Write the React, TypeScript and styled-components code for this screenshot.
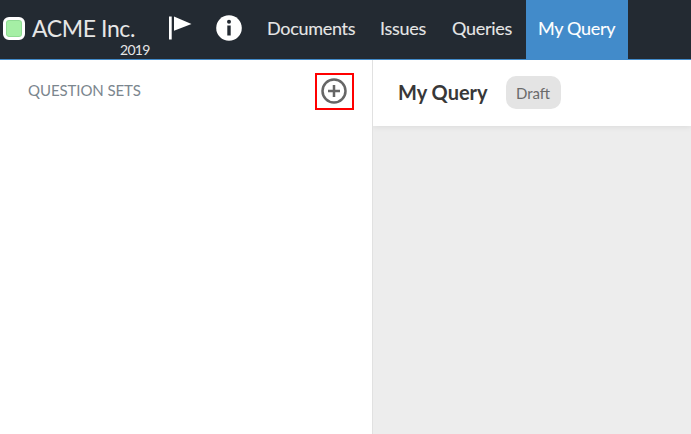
import React from 'react';
import styled, { createGlobalStyle } from 'styled-components';

const GlobalStyle = createGlobalStyle`
  * { box-sizing: border-box; }
  body { margin: 0; font-family: Lato, sans-serif; background: #fff; }
`;

const Page = styled.div`
  display: flex;
  flex-direction: column;
  height: 100vh;
  overflow: hidden;
`;

const NavBar = styled.header`
  display: flex;
  flex: none;
  height: 60px;
  background: #232a32;
  border-bottom: 1px solid #428bca;
`;

const Brand = styled.div`
  display: flex;
  align-items: flex-start;
  width: 150px;
  padding-left: 3px;
`;

const Logo = styled.span`
  flex: none;
  width: 22px;
  height: 23px;
  margin: 17px 7px 0 0;
  border: 3px solid #fff;
  border-radius: 6px;
  background: #a5efa5;
  box-shadow: inset 0 0 0 1px #8fdb93;
`;

const BrandText = styled.div`
  display: flex;
  flex-direction: column;
  color: #e6e6e6;
`;

const BrandName = styled.span`
  margin-top: 14px;
  font-size: 23px;
  line-height: 29px;
  letter-spacing: -0.4px;
  white-space: nowrap;
`;

const BrandYear = styled.span`
  margin-left: 88px;
  font-size: 14px;
  line-height: 14px;
  letter-spacing: -0.7px;
`;

const IconButton = styled.button<{ $width: number }>`
  display: flex;
  align-items: flex-start;
  width: ${(p) => p.$width}px;
  padding: 15px 0 0;
  border: 0;
  background: none;
  color: #fff;
`;

const NavItem = styled.a<{ $width: number; $active?: boolean }>`
  flex: none;
  width: ${(p) => p.$width}px;
  padding: 16px 0 0 12px;
  height: 59px;
  font-size: 18px;
  line-height: 24px;
  letter-spacing: -0.3px;
  white-space: nowrap;
  -webkit-text-stroke: 0.1px;
  color: ${(p) => (p.$active ? '#fff' : '#e6e6e6')};
  background: ${(p) => (p.$active ? '#428bca' : 'transparent')};
`;

const Body = styled.main`
  display: flex;
  flex: 1;
  min-height: 0;
`;

const Sidebar = styled.aside`
  width: 373px;
  border-right: 1px solid #e1e1e1;
`;

const SidebarHeader = styled.div`
  display: flex;
  justify-content: space-between;
  align-items: flex-start;
  padding: 13px 18px 0 28px;
`;

const SidebarTitle = styled.h2`
  margin: 7px 0 0;
  font-size: 15px;
  font-weight: 400;
  line-height: 20px;
  letter-spacing: -0.08px;
  color: #7b868e;
`;

const AddButton = styled.button`
  display: flex;
  width: 39px;
  height: 37px;
  padding: 3px 0 0 4px;
  border: 2px solid #f00;
  background: none;
`;

const Content = styled.section`
  flex: 1;
  background: #ededed;
`;

const ContentHeader = styled.div`
  display: flex;
  align-items: flex-start;
  height: 66px;
  padding: 16px 25px 0;
  background: #fff;
  box-shadow: 0 1px 6px rgba(0, 0, 0, 0.08);
  clip-path: inset(0 0 -10px 0);
`;

const Title = styled.h1`
  width: 108px;
  margin: 4px 0 0;
  font-size: 20px;
  font-weight: 700;
  line-height: 24px;
  color: #383838;
  white-space: nowrap;
`;

const Badge = styled.span`
  width: 55px;
  height: 33px;
  padding-right: 1px;
  border-radius: 10px;
  background: #e4e4e4;
  color: #6b6b6b;
  font-size: 15px;
  line-height: 35px;
  text-align: center;
`;

const navItems = [
  { label: 'Documents', width: 113 },
  { label: 'Issues', width: 72 },
  { label: 'Queries', width: 86 },
  { label: 'My Query', width: 102, active: true },
];

export default function App() {
  return (
    <Page>
      <GlobalStyle />
      <NavBar>
        <Brand>
          <Logo />
          <BrandText>
            <BrandName>ACME Inc.</BrandName>
            <BrandYear>2019</BrandYear>
          </BrandText>
        </Brand>
        <IconButton $width={65} aria-label="Flag">
          <svg width="46" height="28" fill="currentColor">
            <path d="M19 1.5h2.7v23H19zM24 1.5l17.5 7.6L24 15.8z" />
          </svg>
        </IconButton>
        <IconButton $width={40} aria-label="Information">
          <svg width="28" height="28">
            <circle cx="14" cy="13" r="12.8" fill="currentColor" />
            <circle cx="14" cy="6.8" r="2" fill="#232a32" />
            <path d="M12.3 10.5h3.4v10h-3.4z" fill="#232a32" />
          </svg>
        </IconButton>
        {navItems.map((item) => (
          <NavItem key={item.label} $width={item.width} $active={item.active}>
            {item.label}
          </NavItem>
        ))}
      </NavBar>
      <Body>
        <Sidebar>
          <SidebarHeader>
            <SidebarTitle>QUESTION SETS</SidebarTitle>
            <AddButton aria-label="Add question set">
              <svg width="27" height="27" fill="none" stroke="#666" strokeWidth="2.5">
                <circle cx="13" cy="13" r="11.5" />
                <path d="M13 7v12M7 13h12" />
              </svg>
            </AddButton>
          </SidebarHeader>
        </Sidebar>
        <Content>
          <ContentHeader>
            <Title>My Query</Title>
            <Badge>Draft</Badge>
          </ContentHeader>
        </Content>
      </Body>
    </Page>
  );
}
